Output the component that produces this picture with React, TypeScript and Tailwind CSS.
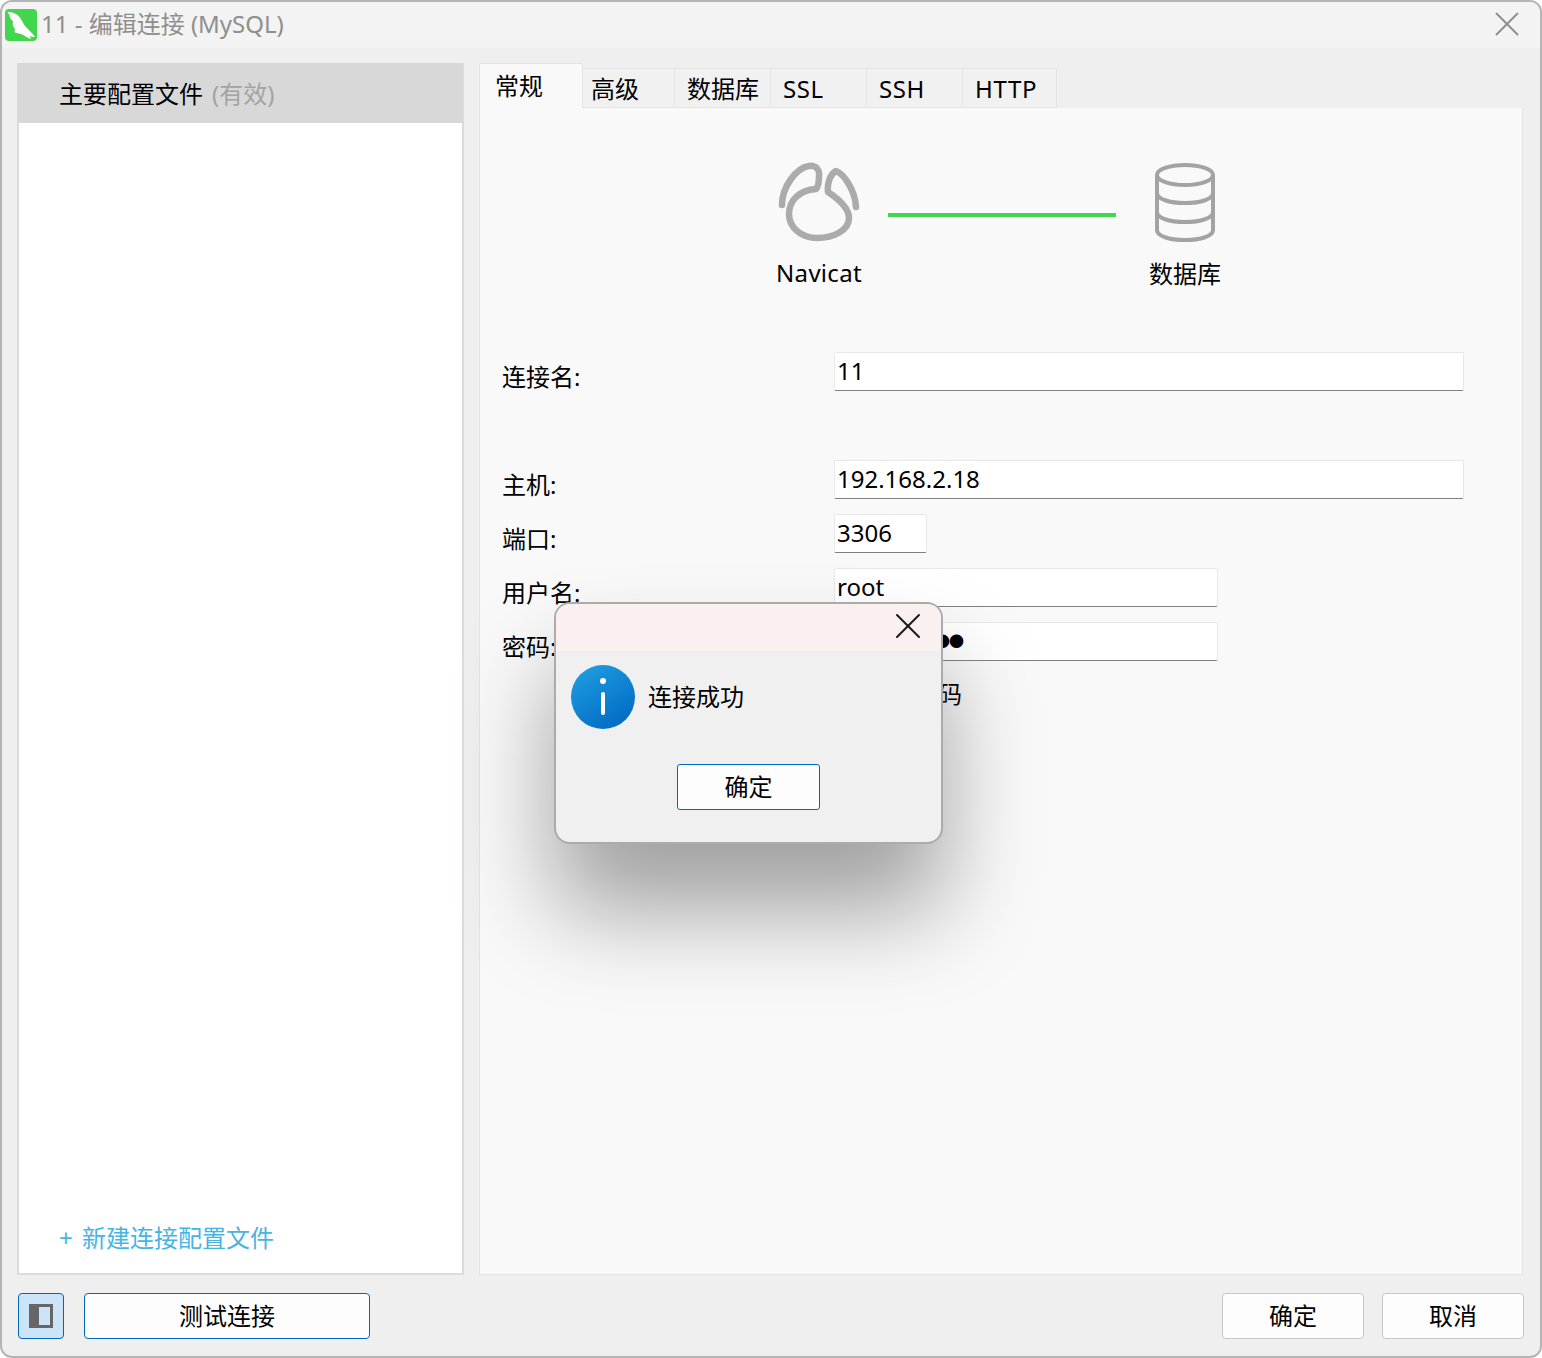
import type { ReactNode } from "react";
import { X } from "lucide-react";

const tabs = [
  { label: "高级", w: "w-[92px]", pl: "pl-[8px]" },
  { label: "数据库", w: "w-[96px]", pl: "pl-[12px]" },
  { label: "SSL", w: "w-[96px]", pl: "pl-[12px] tracking-[0.6px]" },
  { label: "SSH", w: "w-[96px]", pl: "pl-[12px] tracking-[0.6px]" },
  { label: "HTTP", w: "w-[94px]", pl: "pl-[12px] tracking-[0.7px]" },
];

function AppLogo() {
  return (
    <div className="flex h-[32px] w-[32px] shrink-0 items-center justify-center rounded-[4px] bg-[#41d64e]">
      <svg width="32" height="32" viewBox="0 0 32 32" aria-hidden>
        <path
          fill="#fff"
          d="M2.5 3 C6 2.5 10 4 13 6.5 C17 10 18 15 21 18 C24 21 28 25 30 28 C27 28 26 27.5 25 27 L26 30 C22 29 19 26 16 25 C14 24.5 11 24 9.5 23 L10 20 C8 18 7 15 8 12.5 C6 10 4 8 5 7 Z"
        />
      </svg>
    </div>
  );
}

function NavicatIcon() {
  return (
    <svg width="84" height="82" viewBox="0 0 84 82" fill="none" aria-hidden>
      <path
        stroke="#ababab"
        strokeWidth="6.5"
        strokeLinecap="round"
        strokeLinejoin="round"
        d="M5 43 C5 25 19 6 32 4 C39 3 43 8 42 14 C42 20 41 25 39 27 C23 28 12 38 12 52 C12 66 25 76 40 76 C57 76 72 68 72 56 C72 45 60 36 51 30 C50 22 53 12 59 9 C67 12 78 28 79 45"
      />
    </svg>
  );
}

function DatabaseIcon() {
  return (
    <svg width="60" height="82" viewBox="0 0 60 82" fill="none" aria-hidden>
      <g stroke="#a3a3a3" strokeWidth="4">
        <ellipse cx="30" cy="13" rx="28" ry="10" />
        <path d="M2 13 V68 C2 74 14 78 30 78 C46 78 58 74 58 68 V13" />
        <path d="M2 31 C2 37 14 41 30 41 C46 41 58 37 58 31" />
        <path d="M2 50 C2 56 14 60 30 60 C46 60 58 56 58 50" />
      </g>
    </svg>
  );
}

function InfoIcon() {
  return (
    <svg width="64" height="64" viewBox="0 0 64 64" aria-hidden className="shrink-0">
      <defs>
        <linearGradient id="info" x1="0.2" y1="0" x2="0.8" y2="1">
          <stop offset="0" stopColor="#1f9de0" />
          <stop offset="1" stopColor="#0069c2" />
        </linearGradient>
      </defs>
      <circle cx="32" cy="32" r="32" fill="url(#info)" />
      <circle cx="32" cy="16" r="3" fill="#fff" />
      <rect x="30" y="27" width="4" height="23" rx="2" fill="#fff" />
    </svg>
  );
}

function Field({
  label,
  children,
  width,
  className = "",
}: {
  label: string;
  children: ReactNode;
  width: string;
  className?: string;
}) {
  return (
    <div className={`flex h-[38px] ${className}`.trim()}>
      <div className="w-[332px] shrink-0 pt-[7px] leading-[36px]">{label}</div>
      <div
        className={`h-[39px] ${width} rounded-[2px] border border-[#e8e8e8] border-b-[#808080] bg-white pl-[2px] leading-[36px]`}
      >
        {children}
      </div>
    </div>
  );
}

function FooterButton({ label, primary }: { label: string; primary?: boolean }) {
  return (
    <button
      className={
        primary
          ? "h-[46px] w-[286px] rounded-[4px] border border-[#0067c0] bg-[#fdfdfd]"
          : "h-[46px] w-[142px] rounded-[4px] border border-[#c6c6c6] bg-[#fdfdfd]"
      }
    >
      {label}
    </button>
  );
}

export default function App() {
  return (
    <div className="relative flex h-[1358px] w-[1542px] flex-col overflow-hidden bg-white font-['Noto_Sans','Noto_Sans_CJK_SC',sans-serif] text-[24px] text-black">
      <div className="flex h-full flex-col rounded-[12px] border-2 border-[#b4b4b4] bg-[#efefef]">
        <div className="flex h-[46px] shrink-0 items-center rounded-t-[10px] bg-[#f3f3f3] pl-[3px] pr-[12px] text-[#8f8f8f]">
          <AppLogo />
          <span className="ml-[4px] pb-[2px] leading-[32px]">11 - 编辑连接 (MySQL)</span>
          <X className="-mt-[2px] ml-auto text-[#8c8c8c]" size={42} strokeWidth={1.8} absoluteStrokeWidth />
        </div>

        <div className="flex h-[1227px] shrink-0 pt-[15px]">
          <div className="ml-[15px] flex h-[1212px] w-[447px] flex-col border-2 border-t-0 border-[#dcdcdc] bg-white">
            <div className="-mx-[1px] flex h-[60px] items-center bg-[#d8d8d8] pl-[41px] pt-[2px]">
              主要配置文件<span className="ml-[9px] text-[#a3a3a3]">(有效)</span>
            </div>
            <div className="mt-auto flex pb-[17px] pl-[40px] leading-[36px] text-[#46b4e3]">
              <span className="w-[23px]">+</span>新建连接配置文件
            </div>
          </div>

          <div className="ml-[15px] flex h-[1212px] w-[1044px] flex-col">
            <div className="flex h-[45px] shrink-0 items-end">
              <div className="h-[45px] w-[104px] rounded-t-[2px] border border-b-0 border-[#e4e4e4] bg-[#f9f9f9] pl-[15px] leading-[44px]">
                常规
              </div>
              {tabs.map((t) => (
                <div
                  key={t.label}
                  className={`h-[40px] ${t.w} ${t.pl} border border-l-0 border-[#e4e4e4] bg-[#f1f1f1] leading-[40px]`}
                >
                  {t.label}
                </div>
              ))}
            </div>
            <div className="flex-1 border border-t-0 border-[#e4e4e4] bg-[#f9f9f9] pl-[22px]">
              <div className="flex pl-[257px] pt-[54px]">
                <div className="flex w-[120px] flex-col items-center">
                  <NavicatIcon />
                  <div className="mt-[11px] leading-[36px] tracking-[0.3px]">Navicat</div>
                </div>
                <div className="ml-[9px] mt-[51px] h-[4px] w-[228px] bg-[#41d64e]" />
                <div className="ml-[9px] flex w-[120px] flex-col items-center">
                  <DatabaseIcon />
                  <div className="mt-[12px] h-[36px] leading-[36px]">数据库</div>
                </div>
              </div>

              <Field label="连接名:" width="w-[630px]" className="mt-[60px]">11</Field>
              <Field label="主机:" width="w-[630px]" className="mt-[70px]">192.168.2.18</Field>
              <Field label="端口:" width="w-[93px]" className="mt-[16px]">3306</Field>
              <Field label="用户名:" width="w-[384px]" className="mt-[16px]">root</Field>
              <Field label="密码:" width="w-[384px]" className="mt-[16px]">
                <span className="align-[3px] text-[15px] tracking-[-1px]">●●●●●●●●●</span>
              </Field>
              <div className="ml-[332px] mt-[15px] flex h-[38px] items-center pl-[32px]">保存密码</div>
            </div>
          </div>
        </div>

        <div className="flex flex-1 items-start pl-[16px] pr-[16px] pt-[18px]">
          <button className="flex h-[46px] w-[46px] items-center justify-center rounded-[4px] border border-[#0067c0] bg-[#cce4f7]">
            <span className="flex h-[24px] w-[24px] border-[3px] border-[#666] bg-[#cce4f7]">
              <span className="h-full w-[7px] bg-[#666]" />
            </span>
          </button>
          <div className="ml-[20px]">
            <FooterButton label="测试连接" primary />
          </div>
          <div className="ml-auto flex gap-[18px]">
            <FooterButton label="确定" />
            <FooterButton label="取消" />
          </div>
        </div>
      </div>

      <div className="absolute left-[554px] top-[602px] h-[242px] w-[389px] rounded-[16px] border-2 border-[#ababab] bg-[#f0f0f0] shadow-[0_66px_96px_0_rgba(0,0,0,0.36)]">
        <div className="flex h-[47px] items-center justify-end rounded-t-[14px] bg-[#f9f0ef] pr-[11px]">
          <X className="-mt-[4px] text-[#1a1a1a]" size={44} strokeWidth={2} absoluteStrokeWidth />
        </div>
        <div className="flex items-center pl-[15px] pt-[14px]">
          <InfoIcon />
          <span className="ml-[13px] leading-[36px]">连接成功</span>
        </div>
        <div className="flex justify-center pt-[35px]">
          <button className="h-[46px] w-[143px] rounded-[3px] border border-[#0067c0] bg-[#fdfdfd]">确定</button>
        </div>
      </div>
    </div>
  );
}
